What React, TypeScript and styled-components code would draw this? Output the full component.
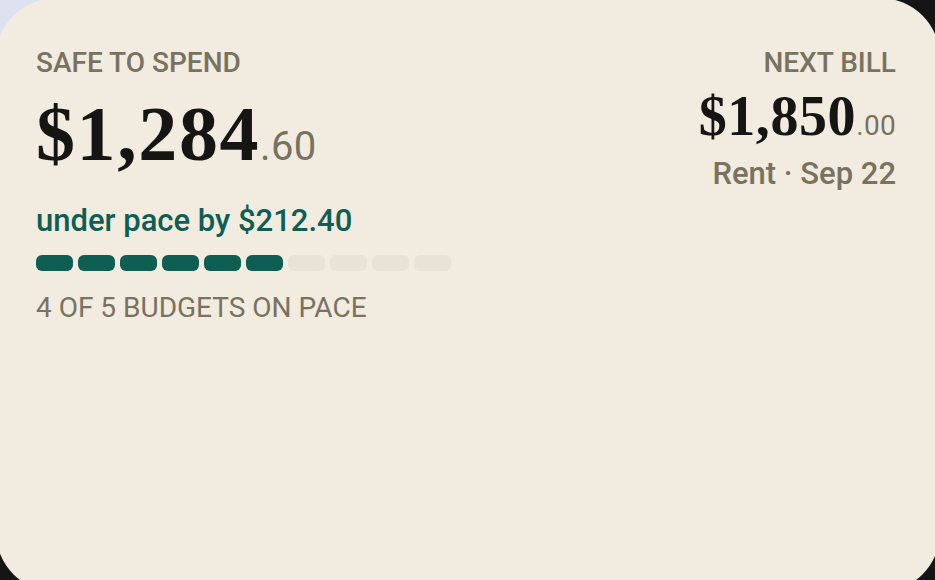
import styled, { createGlobalStyle } from "styled-components";

const Global = createGlobalStyle`
  html, body {
    margin: 0;
    padding: 0;
    width: 935px;
    height: 580px;
    overflow: hidden;
    background: linear-gradient(135deg, #dde0ef 0, #dde0ef 46px, #151515 46px);
  }
  * { box-sizing: border-box; }
`;

const Card = styled.section`
  width: 944px;
  height: 594px;
  margin: -2px 0 0 -4px;
  border-radius: 60px;
  background: #f1ebe0;
  padding: 48px 44px 0 40px;
  display: flex;
  justify-content: space-between;
  align-items: flex-start;
  font-family: Roboto, "Liberation Sans", sans-serif;
`;

const Column = styled.div<{ $align?: "left" | "right" }>`
  display: flex;
  flex-direction: column;
  align-items: ${(p) => (p.$align === "right" ? "flex-end" : "flex-start")};
`;

const Label = styled.div`
  font-size: 28px;
  font-weight: 500;
  color: #78725f;
  text-transform: uppercase;
  line-height: 1.2;
`;

const Amount = styled.div<{ $size: number; $cents: number; $spacing: number; $gap: number }>`
  margin-top: ${(p) => p.$gap}px;
  font-family: "Liberation Serif", "Times New Roman", serif;
  font-weight: 700;
  font-size: ${(p) => p.$size}px;
  color: #161513;
  line-height: 1;
  letter-spacing: ${(p) => p.$spacing}px;
  white-space: nowrap;

  small {
    font-family: Roboto, "Liberation Sans", sans-serif;
    font-weight: 400;
    font-size: ${(p) => p.$cents}px;
    color: #78725f;
    letter-spacing: 0.3px;
  }
`;

const Pace = styled.div`
  font-size: 31px;
  font-weight: 500;
  color: #0e5e53;
  margin-top: 29px;
`;

const Segments = styled.div`
  display: flex;
  gap: 5px;
  margin-top: 16px;
`;

const Segment = styled.span<{ $on: boolean }>`
  width: 37px;
  height: 16px;
  border-radius: 6px;
  background: ${(p) => (p.$on ? "#0e5e53" : "#e9e2d6")};
`;

const Footnote = styled(Label)`
  font-weight: 400;
  margin-top: 20px;
`;

const BillMeta = styled.div`
  font-size: 31px;
  font-weight: 500;
  color: #78725f;
  margin-top: 11px;
`;

export default function App() {
  const filled = 6;
  return (
    <>
      <Global />
      <Card>
        <Column>
          <Label>Safe to spend</Label>
          <Amount $size={78} $cents={40} $spacing={1.6} $gap={15}>
            $1,284<small>.60</small>
          </Amount>
          <Pace>under pace by $212.40</Pace>
          <Segments>
            {Array.from({ length: 10 }, (_, i) => (
              <Segment key={i} $on={i < filled} />
            ))}
          </Segments>
          <Footnote>4 of 5 budgets on pace</Footnote>
        </Column>
        <Column $align="right">
          <Label>Next bill</Label>
          <Amount $size={56} $cents={28} $spacing={0.6} $gap={8}>
            $1,850<small>.00</small>
          </Amount>
          <BillMeta>Rent · Sep 22</BillMeta>
        </Column>
      </Card>
    </>
  );
}
